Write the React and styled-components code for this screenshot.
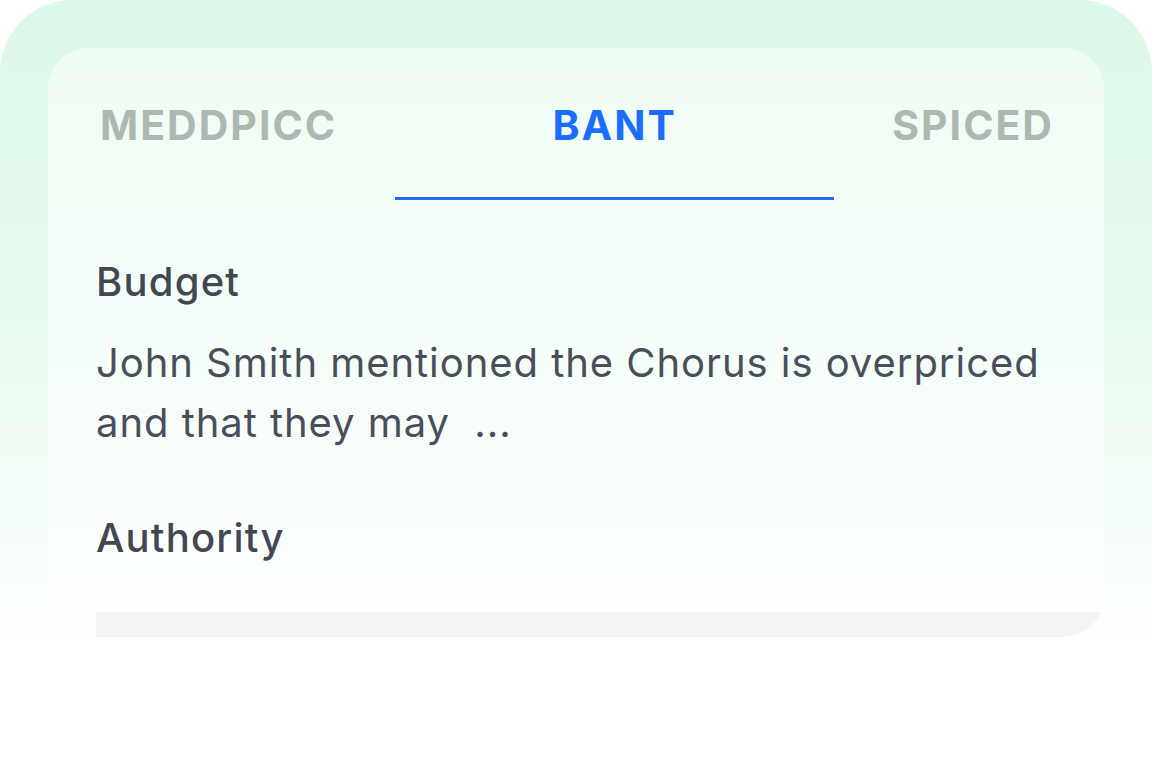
import React, { useState } from 'react'
import styled, { createGlobalStyle } from 'styled-components'

const GlobalStyle = createGlobalStyle`
    html, body {
        margin: 0;
        padding: 0;
        background: #ffffff;
    }
    body {
        font-family: Inter, "Noto Sans", sans-serif;
    }
`

const Backdrop = styled.div`
    width: 1152px;
    height: 771px;
    box-sizing: border-box;
    padding: 48px 48px 0;
    border-radius: 72px 72px 0 0;
    background: linear-gradient(180deg, #dcf8e8 0%, #e6faee 35%, #f6fdf9 70%, #ffffff 86%);
`

const Panel = styled.div`
    height: 589px;
    box-sizing: border-box;
    padding: 53px 48px 0;
    border-radius: 40px;
    overflow: hidden;
    background: linear-gradient(180deg, #effcf4 0%, #f4fdf8 45%, #fcfefd 100%);
`

const TabRow = styled.div`
    display: flex;
    justify-content: space-between;
    padding: 0 2px 0 4px;
    height: 99px;
`

const Tab = styled.button`
    position: relative;
    align-self: flex-start;
    border: none;
    background: none;
    padding: 0;
    cursor: pointer;
    font-family: Inter, sans-serif;
    font-size: 41px;
    line-height: 48px;
    font-weight: 700;
    letter-spacing: 2px;
    color: ${p => (p.$active ? '#1a6dff' : '#adb8b1')};
    &::after {
        content: '';
        display: ${p => (p.$active ? 'block' : 'none')};
        position: absolute;
        left: -157px;
        right: -157px;
        top: 96px;
        height: 3px;
        background: #1a6dff;
    }
`

const Field = styled.h3`
    margin: 0;
    font-size: 40px;
    line-height: 48px;
    font-weight: 500;
    letter-spacing: 1.2px;
    color: #434752;
    padding-top: ${p => p.$gap}px;
`

const Summary = styled.p`
    margin: 27px 0 0;
    font-size: 40px;
    line-height: 60px;
    font-weight: 400;
    letter-spacing: 0.95px;
    color: #4a4e5b;
`

const Placeholder = styled.div`
    margin-top: 50px;
    margin-right: -48px;
    height: 60px;
    background: #f4f4f4;
`

const tabs = ['MEDDPICC', 'BANT', 'SPICED']

const App = () => {
    const [active, setActive] = useState('BANT')
    return (
        <>
            <GlobalStyle />
            <Backdrop>
                <Panel>
                    <TabRow>
                        {tabs.map(t => (
                            <Tab key={t} $active={active === t} onClick={() => setActive(t)}>
                                {t}
                            </Tab>
                        ))}
                    </TabRow>
                    <Field $gap={58}>Budget</Field>
                    <Summary>
                        John Smith mentioned the Chorus is overpriced
                        <br />
                        and that they may&nbsp; ...
                    </Summary>
                    <Field $gap={61}>Authority</Field>
                    <Placeholder />
                </Panel>
            </Backdrop>
        </>
    )
}

export default App
